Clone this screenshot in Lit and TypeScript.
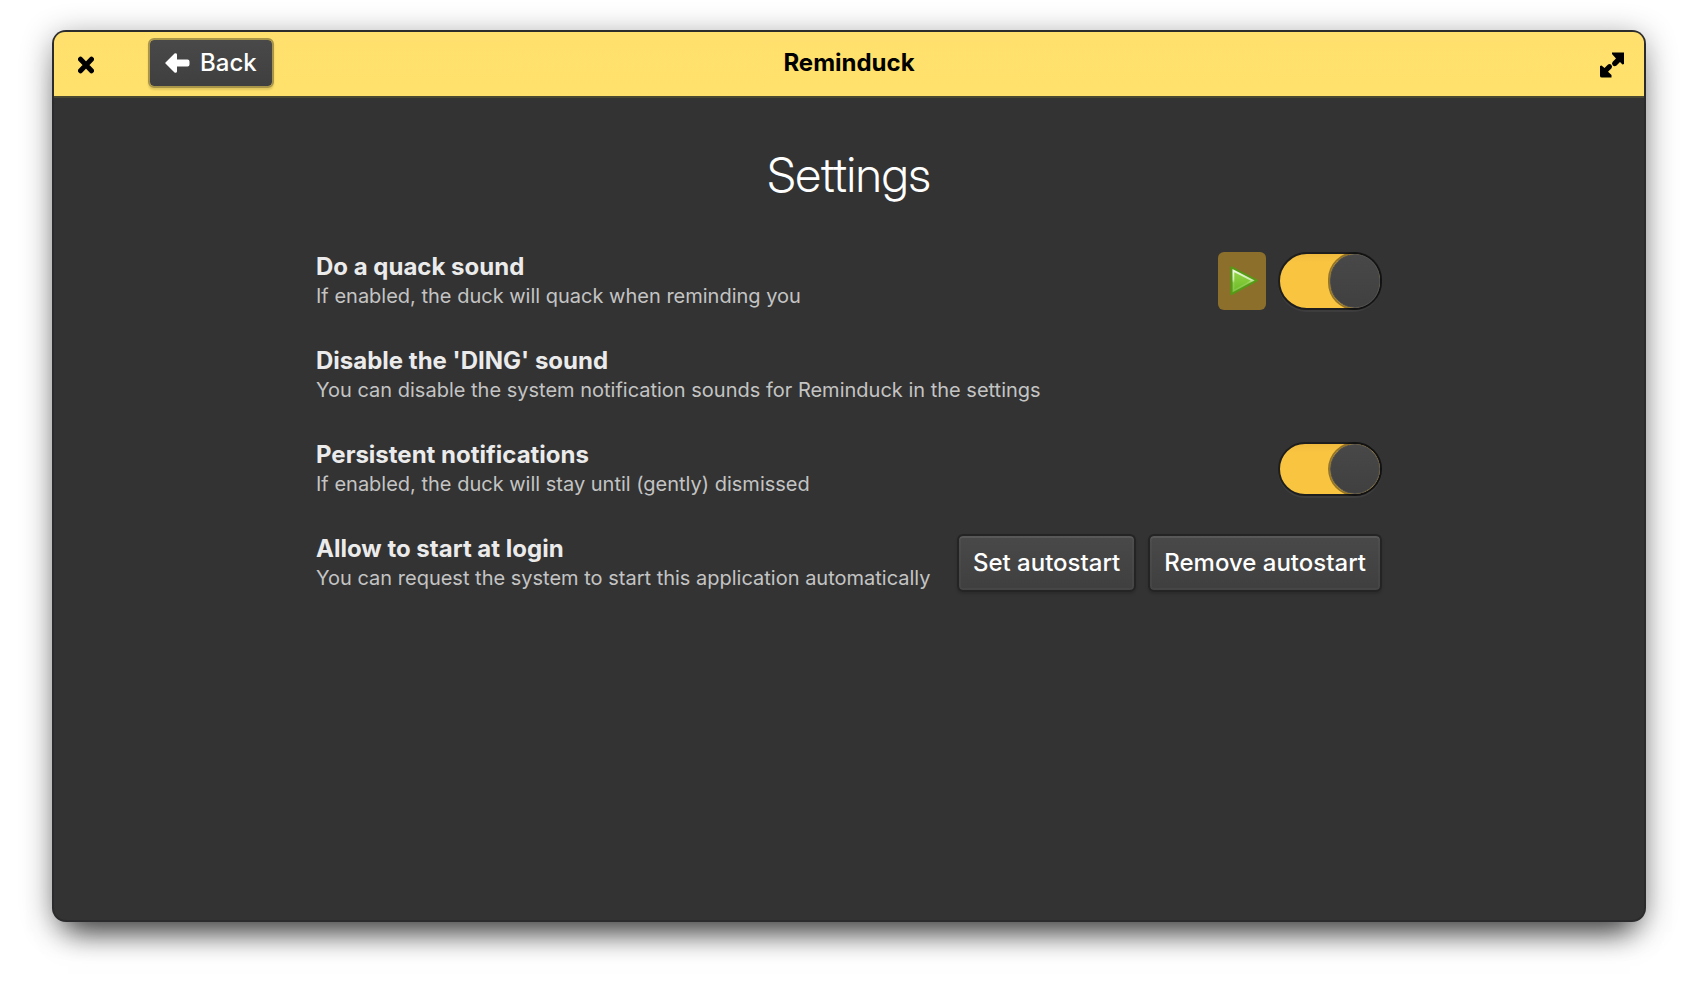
import { LitElement, html, css, svg } from "lit";
import { customElement, property } from "lit/decorators.js";

@customElement("setting-row")
export class SettingRow extends LitElement {
  @property() heading = "";
  @property() description = "";

  static styles = css`
    :host {
      display: flex;
      align-items: stretch;
      gap: 12px;
      min-height: 58px;
    }
    .text {
      flex: 1;
      min-width: 0;
    }
    .heading {
      margin: 0;
      font-size: 24px;
      line-height: 30px;
      font-weight: 700;
      color: #ebebeb;
    }
    .description {
      margin: 0;
      font-size: 20px;
      line-height: 28px;
      color: #c4c4c4;
    }
  `;

  render() {
    return html`
      <div class="text">
        <h2 class="heading">${this.heading}</h2>
        <p class="description">${this.description}</p>
      </div>
      <slot></slot>
    `;
  }
}

const closeIcon = svg`
  <svg width="16" height="18" viewBox="0 0 16 18" aria-hidden="true">
    <path d="M2.500 3.200L13.500 14.800M13.500 3.200L2.500 14.800" stroke="#000" stroke-width="5" stroke-linecap="round" fill="none"/>
  </svg>`;

const maximizeIcon = svg`
  <svg width="24" height="26" viewBox="0 0 24 26" aria-hidden="true">
    <path d="M12 0.500H24V12L22.500 12.500L20 10L16.500 13.500Q14.500 15 12.700 13.300Q11.200 11.500 12.700 9.700L16 6.500L12 2Z" fill="#000"/>
    <path d="M0 14L1.500 13.500L4.500 16L7.800 12.700Q9.500 11.300 11.300 12.800Q12.800 14.500 11.500 16.300L8 19.700L11.500 23V25.500H2Q0 25.500 0 24Z" fill="#000"/>
  </svg>`;

const backIcon = svg`
  <svg width="25" height="20" viewBox="0 0 25 20" aria-hidden="true">
    <path d="M0.500 9.500L9.500 0.600Q11.500 -0.500 12 1.500V6.500H22.500Q24.500 6.500 24.500 8.500V11.500Q24.500 13.500 22.500 13.500H12V18.500Q11.500 20.500 9.500 19.400L0.500 10.500Q0 10 0.500 9.500Z" fill="#fff"/>
  </svg>`;

const playIcon = svg`
  <svg width="28" height="30" viewBox="0 0 28 30" aria-hidden="true">
    <defs>
      <linearGradient id="leaf" x1="0" y1="0" x2="0" y2="1">
        <stop offset="0" stop-color="#9bdb4d"/>
        <stop offset="1" stop-color="#68b723"/>
      </linearGradient>
      <linearGradient id="shine" x1="0" y1="0" x2="0" y2="1">
        <stop offset="0" stop-color="#fff" stop-opacity="0.850"/>
        <stop offset="0.450" stop-color="#fff" stop-opacity="0.600"/>
        <stop offset="0.600" stop-color="#fff" stop-opacity="0.150"/>
        <stop offset="1" stop-color="#fff" stop-opacity="0.150"/>
      </linearGradient>
    </defs>
    <path d="M1.500 1.500L26.500 14.500L1.500 28Z" fill="url(#leaf)" stroke="#559a14" stroke-width="2.400" stroke-linejoin="round"/>
    <path d="M3.400 4.600L22.800 14.600L3.400 25Z" fill="none" stroke="url(#shine)" stroke-width="1.800"/>
  </svg>`;

@customElement("app-root")
export class AppRoot extends LitElement {
  static styles = css`
    :host {
      display: flex;
      box-sizing: border-box;
      min-height: 100vh;
      padding: 32px 54px 80px;
      background: #fff;
      font-family: Inter, "Open Sans", sans-serif;
      font-size: 24px;
      line-height: 30px;
      color: #fff;
    }
    .window {
      flex: 1;
      display: flex;
      flex-direction: column;
      border-radius: 12px;
      background: #333;
      box-shadow:
        0 0 0 2px #2b2b2d,
        0 6px 32px rgba(0, 0, 0, 0.45),
        0 26px 28px -14px rgba(0, 0, 0, 0.6);
    }
    header {
      display: grid;
      grid-template-columns: 1fr auto 1fr;
      align-items: center;
      height: 64px;
      padding: 0 20px;
      border-bottom: 2px solid #4b4832;
      border-radius: 11px 11px 0 0;
      background: linear-gradient(#ffe06e, #ffe16b);
      color: #000;
    }
    button {
      margin: 0;
      border: 0;
      font: inherit;
      cursor: pointer;
    }
    .start {
      display: flex;
      align-items: center;
      gap: 54px;
    }
    .icon {
      display: flex;
      padding: 2px 0 0;
      background: none;
      justify-self: end;
    }
    .close {
      padding-left: 4px;
    }
    .title {
      margin: 0;
      padding-bottom: 2px;
      font-size: 24px;
      font-weight: 700;
    }
    .raised {
      border: 2px solid #242424;
      border-radius: 6px;
      padding: 0 14px;
      color: #fff;
      background: linear-gradient(#494949, #3f3f3f) padding-box;
      box-shadow:
        inset 0 2px 0 rgba(255, 255, 255, 0.06),
        inset 0 0 0 2px rgba(255, 255, 255, 0.03),
        0 2px 3px rgba(0, 0, 0, 0.16);
      font-weight: 500;
    }
    .back {
      display: flex;
      align-items: center;
      gap: 10px;
      height: 50px;
      margin-bottom: 2px;
      padding: 0 15px;
      border-color: #a99549;
      box-shadow: 0 2px 2px rgba(0, 0, 0, 0.12);
    }
    main {
      display: flex;
      flex-direction: column;
      align-items: center;
      padding: 46px 24px;
    }
    h1 {
      margin: 0 0 46px;
      font-family: "Inter Display", Inter, "Open Sans", sans-serif;
      font-size: 48px;
      line-height: 62px;
      font-weight: 300;
    }
    .rows {
      display: grid;
      gap: 36px;
      width: 100%;
      max-width: 1066px;
    }
    .play {
      display: grid;
      place-items: center;
      width: 48px;
      padding: 0 0 0 4px;
      border-radius: 6px;
      background: #8c6f2b;
    }
    .switch {
      appearance: none;
      box-sizing: border-box;
      width: 104px;
      min-height: 54px;
      margin: 0;
      padding: 0;
      border: 2px solid #1e1e1e;
      border-radius: 29px;
      background: linear-gradient(#f0ba3e, #f9c440 8px);
      box-shadow: 0 2px 0 rgba(255, 255, 255, 0.05);
      display: flex;
      cursor: pointer;
    }
    .switch:only-child {
      align-self: center;
    }
    .switch::before {
      content: "";
      box-sizing: border-box;
      width: 50px;
      border: 1px solid #4f4f4f;
      border-radius: 27px;
      background: linear-gradient(#484848, #404040);
    }
    .switch:checked::before {
      margin-left: auto;
      box-shadow: 0 0 0 2px rgba(0, 0, 0, 0.4);
    }
  `;

  private toggle(label: string) {
    return html`<input class="switch" type="checkbox" role="switch" aria-label=${label} checked />`;
  }

  render() {
    return html`
      <div class="window">
        <header>
          <div class="start">
            <button class="icon close" aria-label="Close">${closeIcon}</button>
            <button class="raised back">${backIcon}<span>Back</span></button>
          </div>
          <p class="title">Reminduck</p>
          <button class="icon" aria-label="Maximize">${maximizeIcon}</button>
        </header>
        <main>
          <h1>Settings</h1>
          <div class="rows">
            <setting-row
              heading="Do a quack sound"
              description="If enabled, the duck will quack when reminding you"
            >
              <button class="play" aria-label="Play">${playIcon}</button>
              ${this.toggle("Do a quack sound")}
            </setting-row>
            <setting-row
              heading="Disable the 'DING' sound"
              description="You can disable the system notification sounds for Reminduck in the settings"
            ></setting-row>
            <setting-row
              heading="Persistent notifications"
              description="If enabled, the duck will stay until (gently) dismissed"
            >
              ${this.toggle("Persistent notifications")}
            </setting-row>
            <setting-row
              heading="Allow to start at login"
              description="You can request the system to start this application automatically"
            >
              <button class="raised">Set autostart</button>
              <button class="raised">Remove autostart</button>
            </setting-row>
          </div>
        </main>
      </div>
    `;
  }
}
